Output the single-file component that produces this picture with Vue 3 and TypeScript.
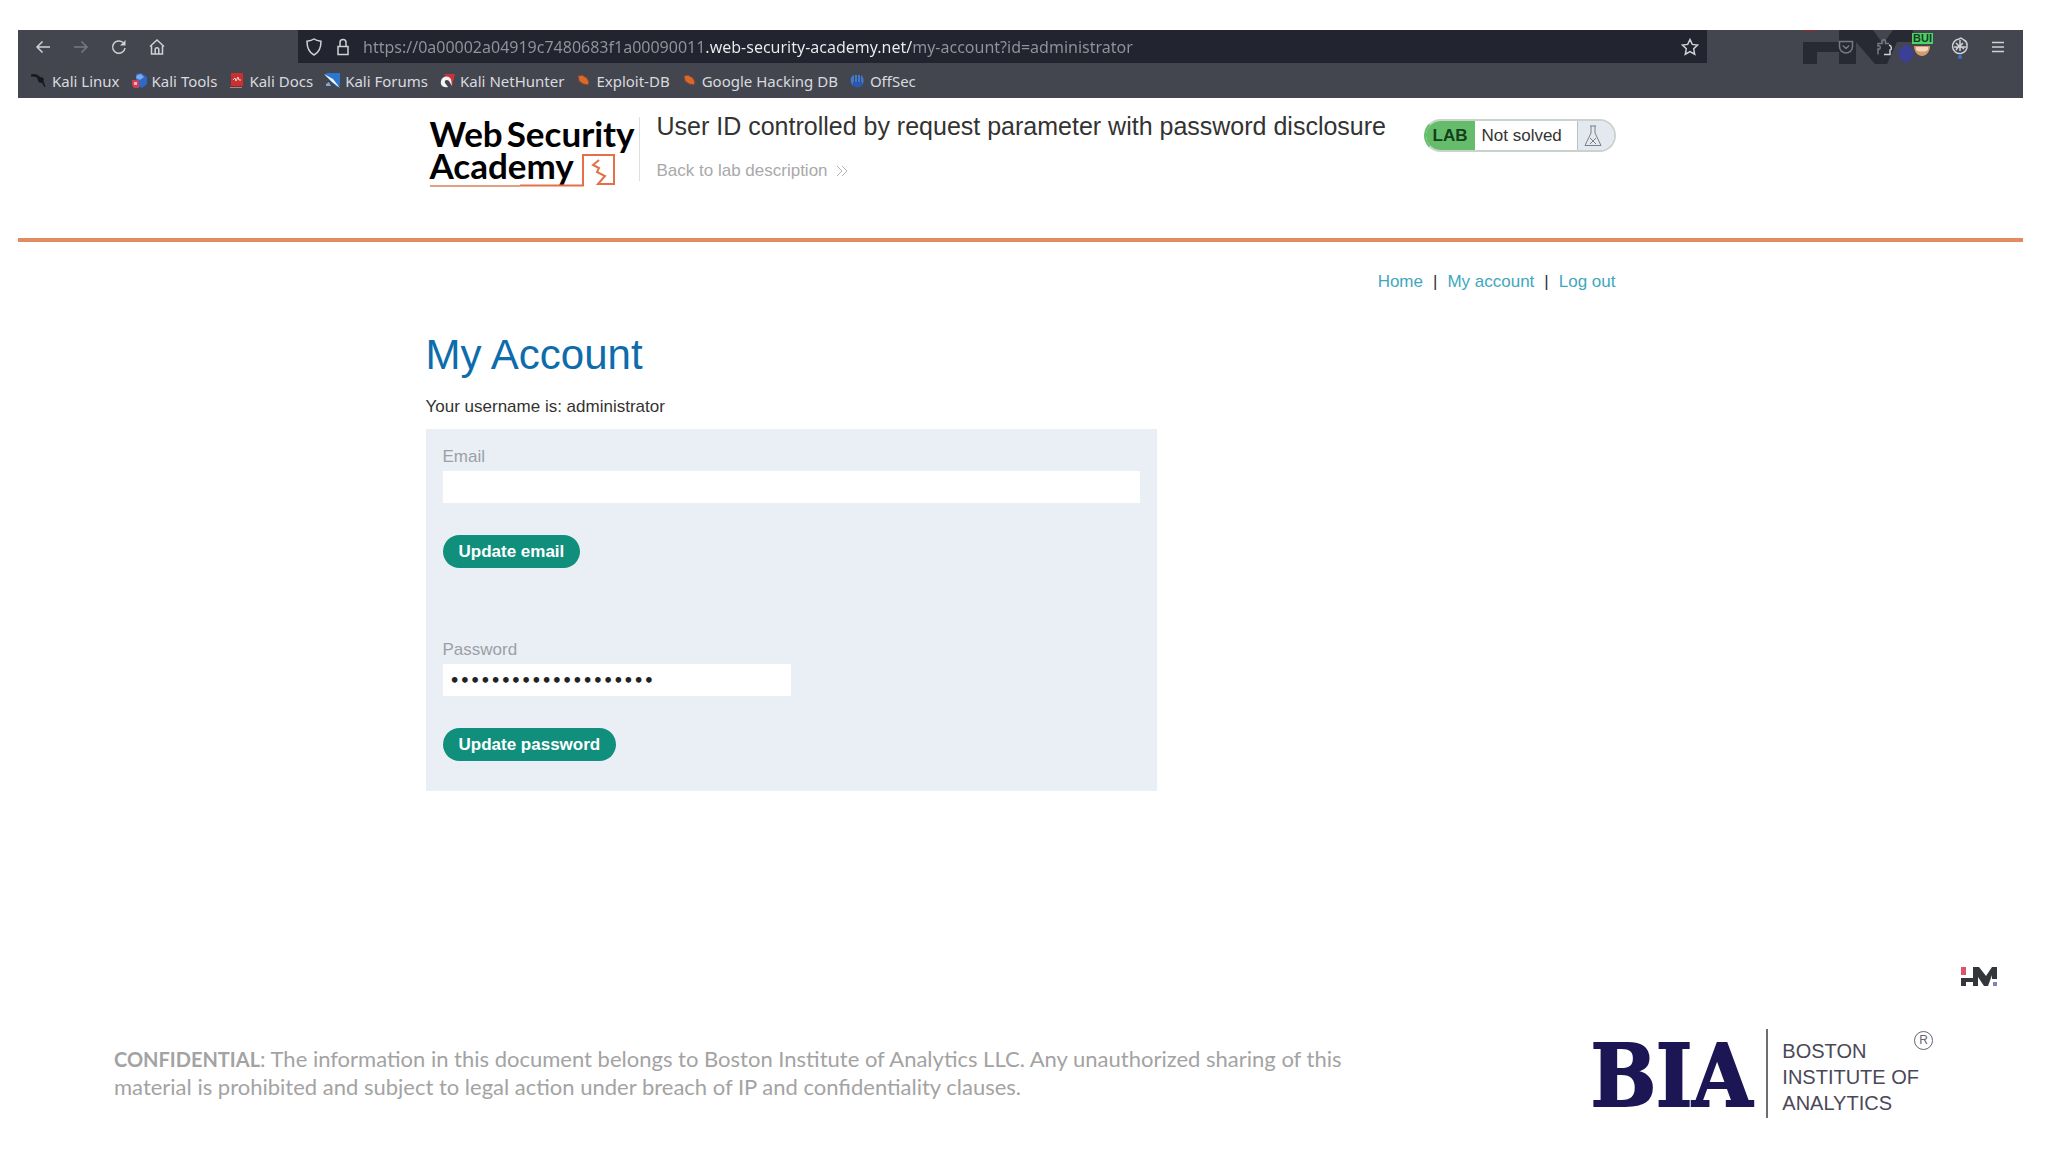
<script setup lang="ts">
import { ref } from 'vue'

interface Bookmark {
  label: string
  icon: string
}

const bookmarks: Bookmark[] = [
  { label: 'Kali Linux', icon: 'linux' },
  { label: 'Kali Tools', icon: 'tools' },
  { label: 'Kali Docs', icon: 'docs' },
  { label: 'Kali Forums', icon: 'forums' },
  { label: 'Kali NetHunter', icon: 'nethunter' },
  { label: 'Exploit-DB', icon: 'exploit' },
  { label: 'Google Hacking DB', icon: 'exploit' },
  { label: 'OffSec', icon: 'offsec' },
]

const address = ref('https://0a00002a04919c7480683f1a00090011.web-security-academy.net/my-account?id=administrator')
const email = ref('')
const password = ref('abcdefghijklmnopqrst')
</script>

<template>
  <div class="slide">
    <section class="browser">
      <div class="chrome">
        <div class="toolbar">
          <nav class="nav-buttons" aria-label="Browser navigation">
            <button type="button" class="tool" aria-label="Back">
              <svg width="18" height="18" viewBox="0 0 18 18"><path d="M16 9H3M8.500 3.500L3 9l5.500 5.500" /></svg>
            </button>
            <button type="button" class="tool dim" aria-label="Forward">
              <svg width="18" height="18" viewBox="0 0 18 18"><path d="M2 9h13M9.500 3.500L15 9l-5.500 5.500" /></svg>
            </button>
            <button type="button" class="tool" aria-label="Reload">
              <svg width="18" height="18" viewBox="0 0 18 18"><path d="M15 10a6.200 6.200 0 1 1-2-5.500" /><path d="M15.500 2v5.500H10z" class="fill" /></svg>
            </button>
            <button type="button" class="tool" aria-label="Home">
              <svg width="18" height="18" viewBox="0 0 18 18"><path d="M2 8.500L9 2l7 6.500M3.500 8v8h11V8M7.200 16v-4.500a1.800 1.800 0 0 1 3.600 0V16" /></svg>
            </button>
          </nav>
          <div class="address">
            <svg width="18" height="20" viewBox="0 0 18 20"><path d="M9 2c2 1.500 4.500 2 7 2.200C16 10 15 15 9 18 3 15 2 10 2 4.200 4.500 4 7 3.500 9 2z" /></svg>
            <svg width="16" height="20" viewBox="0 0 16 20"><path d="M3 9.500h10v8H3zM5 9.500V5.500a3 3 0 0 1 6 0v4" /></svg>
            <input v-model="address" type="text" aria-label="Address" spellcheck="false" />
            <button type="button" class="tool" aria-label="Bookmark this page">
              <svg width="18" height="18" viewBox="0 0 18 18"><path d="M9 1.500l2.300 4.900 5.200.7-3.800 3.700 1 5.400L9 13.600l-4.700 2.600 1-5.400L1.500 7.100l5.200-.7z" /></svg>
            </button>
          </div>
          <div class="extensions">
            <svg class="watermark" width="116" height="36" viewBox="0 0 116 36" aria-hidden="true">
              <path d="M0 0h14v1.500H0z" fill="#7d2f3a" />
              <path d="M0 12h36V0h34l10 14L90 0h20v12H94L84 34H72L53 12v22H36V22H14v12H0z" fill="#272a33" />
              <path d="M103 14l8 7-2 8-6 4-6-4-2-8z" fill="#3b3f96" />
            </svg>
            <button type="button" class="tool dim" aria-label="Save to Pocket">
              <svg width="18" height="18" viewBox="0 0 18 18"><path d="M2.500 3.500h13v5a6.500 6.500 0 0 1-13 0zM5.800 7.500L9 10.500l3.200-3" /></svg>
            </button>
            <button type="button" class="tool dim" aria-label="Extensions">
              <svg width="18" height="18" viewBox="0 0 18 18"><path d="M3 16.500V11c3 1 3-4 0-3V5.500h4c-1.500-5 5-5 3.500 0H14" /><path d="M14 7c3 1 3 5 1 5v4.500H9" class="bright" /></svg>
            </button>
            <button type="button" class="tool proxy" aria-label="Proxy profile">
              <svg width="20" height="22" viewBox="0 0 20 22"><path d="M2 10h16c0 6-4 10-8 10s-8-4-8-10z" fill="#d79a70" stroke="none" /><path d="M4 11h12v3c-3 2-9 2-12 0z" fill="#f0d8ba" stroke="none" /></svg>
              <span class="badge">BUI</span>
            </button>
            <button type="button" class="tool" aria-label="Cookie manager">
              <svg width="20" height="24" viewBox="0 0 20 24"><path d="M9 4A7.300 7.300 0 1 0 17 10c0-3-1-4-3-5l-3-2z" /><path d="M6 8l3 3-3 4M13 8l-3 3 4 3M4 12h12M10 5v11" /><circle cx="10" cy="22" r="2" fill="#3b6fd0" stroke="none" /></svg>
            </button>
            <button type="button" class="tool" aria-label="Menu">
              <svg width="18" height="18" viewBox="0 0 18 18"><path d="M3 4.500h12M3 9h12M3 13.500h12" /></svg>
            </button>
          </div>
        </div>
        <nav class="bookmarks" aria-label="Bookmarks">
          <a v-for="b in bookmarks" :key="b.label" href="#">
            <svg width="17" height="17" viewBox="0 0 17 17" aria-hidden="true">
              <path v-if="b.icon === 'linux'" d="M0 3c4-1 8 0 9 3 3-1 4 1 3 3l2 6-3-5c-3 1-4-1-4-4C5 4 3 4 0 4z" fill="#17181d" stroke="#17181d" />
              <g v-else-if="b.icon === 'tools'">
                <path d="M5 2l5-1 6 4v7l-5 4-6-3z" fill="#2e68c8" />
                <path d="M6 3l4-1 3 3-4 3-4-2z" fill="#7aaae8" />
                <path d="M1 8h7v8H3l-2-3z" fill="#d23d50" />
                <path d="M3 10h3v3H3z" fill="#eab3c0" />
              </g>
              <g v-else-if="b.icon === 'docs'">
                <path d="M3 1h12v13H3z" fill="#c9302f" />
                <path d="M2 15h12v1H2z" fill="#e17069" />
                <path d="M5 8l2-2 1 3 2-4 1 3h2" fill="none" stroke="#f6d3cf" />
              </g>
              <g v-else-if="b.icon === 'forums'">
                <path d="M3 1h13v12l-3 2L1 3z" fill="#2b76cf" />
                <path d="M0 2l9 5 7 9-8-6z" fill="#f1f5fb" />
                <path d="M2 12l3-2 2 4H2z" fill="#7ea8dc" />
              </g>
              <g v-else-if="b.icon === 'nethunter'">
                <path d="M5 2h11l-3 12-2-5z" fill="#c9343a" />
                <path d="M13 14L10 9C8 7 5 8 6 11l3 4C4 16 1 13 2 9c1-5 7-6 10-2z" fill="#f6f3f4" />
              </g>
              <path v-else-if="b.icon === 'exploit'" d="M3 4l4-1 5 3 2 4-1 3-5-1-4-3z" fill="#d9682c" stroke="#7c4630" />
              <g v-else>
                <path d="M2 6c1-2 2-3 3-3v11c-2-1-4-4-3-8zM6 3h2v8H6zM9 3h2v8H9zM12 3c3 2 4 8 0 11z" fill="#3d7ad4" />
                <path d="M4 10h9v4c-3 2-6 2-9 0z" fill="#2a56b4" />
              </g>
            </svg>
            <span>{{ b.label }}</span>
          </a>
        </nav>
      </div>

      <header class="lab-header">
        <div class="container lab-row">
          <div class="academy">
            <div class="academy-line"><span>Web</span><span>Security</span></div>
            <div class="academy-line"><span>Academy</span></div>
            <svg class="academy-mark" width="190" height="38" viewBox="0 0 190 38" aria-hidden="true">
              <path d="M0 34h90" stroke="#e3a184" stroke-width="2" />
              <path d="M90 33.500h63V3h31v29h-16l7-8-8-4 2-4-6-3 6-5" stroke="#e4704a" stroke-width="2" />
            </svg>
          </div>
          <div class="lab-title">
            <h2>User ID controlled by request parameter with password disclosure</h2>
            <a href="#">Back to lab description
              <svg width="13" height="12" viewBox="0 0 13 12" aria-hidden="true"><path d="M1 1l5 5-5 5M6 1l5 5-5 5" /></svg>
            </a>
          </div>
          <div class="status">
            <strong>LAB</strong>
            <span class="state">Not solved</span>
            <span class="flask">
              <svg width="18" height="22" viewBox="0 0 18 22" aria-hidden="true"><path d="M6 1h6M7 1v7L1 20.500h16L11 8V1M6 13l6 6M12 13l-6 6" /></svg>
            </span>
          </div>
        </div>
      </header>

      <main class="container">
        <nav class="account-nav" aria-label="Account">
          <a href="#">Home</a><span>|</span><a href="#">My account</a><span>|</span><a href="#">Log out</a>
        </nav>
        <h1>My Account</h1>
        <p class="username">Your username is: administrator</p>
        <div class="panel">
          <form @submit.prevent>
            <label for="email">Email</label>
            <input id="email" v-model="email" type="email" class="field" />
            <button type="submit" class="action">Update email</button>
          </form>
          <form @submit.prevent>
            <label for="password">Password</label>
            <input id="password" v-model="password" type="password" class="field short" />
            <button type="submit" class="action">Update password</button>
          </form>
        </div>
      </main>
    </section>

    <svg class="hm" width="36" height="20" viewBox="0 0 36 20" aria-hidden="true">
      <path d="M0 0h5v8H0z" fill="#dd5468" />
      <path d="M0 11h12V0h6l7 9 6-9h5v12h-5V8l-4 11h-4l-6-9v9h-5v-4H5v4H0z" fill="#33363b" />
      <path d="M32 15h4v4h-4z" fill="#7f83b5" />
    </svg>

    <footer class="footer">
      <p><strong>CONFIDENTIAL</strong>: The information in this document belongs to Boston Institute of Analytics LLC. Any unauthorized sharing of this<br>material is prohibited and subject to legal action under breach of IP and confidentiality clauses.</p>
      <div class="brand">
        <span class="bia">BIA</span>
        <span class="brand-name">BOSTON<br>INSTITUTE OF<br>ANALYTICS</span>
        <span class="registered">R</span>
      </div>
    </footer>
  </div>
</template>

<style>
body {
  background: #fff;
}
</style>

<style scoped>
* {
  box-sizing: border-box;
}

.slide {
  display: flex;
  flex-direction: column;
  min-height: 100vh;
  padding: 30px 25px 34px 18px;
  font-family: "Liberation Sans", Arial, sans-serif;
  font-size: 17px;
  line-height: 20px;
  color: #333332;
}

a {
  text-decoration: none;
}

.browser {
  flex: 1;
}

.chrome {
  background: #44464f;
  font-family: "Noto Sans", sans-serif;
}

.toolbar {
  display: flex;
  height: 33px;
}

.tool {
  display: flex;
  flex: none;
  align-items: center;
  justify-content: center;
  width: 38px;
  height: 33px;
  padding: 0;
  border: 0;
  background: none;
}

.tool svg,
.address > svg {
  flex: none;
  fill: none;
  stroke: #d0d1d6;
  stroke-width: 1.5;
}

.tool .fill {
  fill: #d0d1d6;
  stroke: none;
}

.tool.dim svg {
  stroke: #777981;
}

.tool .bright {
  stroke: #d0d1d6;
}

.nav-buttons {
  display: flex;
  flex: 0 0 280px;
  padding-left: 6px;
}

.address {
  display: flex;
  flex: 1;
  align-items: center;
  gap: 12px;
  padding-left: 7px;
  background: #22252f;
}

.address .tool {
  width: 34px;
}

.address input {
  flex: 1;
  min-width: 0;
  height: 32px;
  padding: 0;
  border: 0;
  outline: 0;
  background: linear-gradient(to right, #92949b 342px, #eeeef2 342px, #eeeef2 549px, #92949b 549px);
  background-clip: text;
  -webkit-background-clip: text;
  color: transparent;
  font: 16px "Noto Sans", sans-serif;
}

.extensions {
  position: relative;
  display: flex;
  flex: 0 0 316px;
  justify-content: flex-end;
  padding-right: 6px;
}

.extensions .tool {
  position: relative;
}

.watermark {
  position: absolute;
  top: 0;
  right: 104px;
}

.badge {
  position: absolute;
  top: 3px;
  left: 9px;
  width: 21px;
  overflow: hidden;
  background: #4fd06a;
  color: #12401c;
  font-size: 11px;
  font-weight: 700;
  line-height: 11px;
}

.bookmarks {
  display: flex;
  align-items: center;
  gap: 11px;
  height: 35px;
  padding: 0 13px;
}

.bookmarks a {
  display: flex;
  align-items: center;
  gap: 4px;
  color: #d9dadf;
  font-size: 15px;
  white-space: nowrap;
}

.container {
  width: 100%;
  max-width: 1190px;
  margin: 0 auto;
}

.lab-header {
  height: 144px;
  border-bottom: 4px solid #e28a62;
}

.lab-row {
  display: flex;
  align-items: flex-start;
}

.academy {
  position: relative;
  flex: 0 0 214px;
  height: 64px;
  margin-top: 19px;
  padding-left: 4px;
  border-right: 1px solid #dedede;
  color: #000;
  font: 700 35px/32px Lato, sans-serif;
}

.academy-line {
  display: flex;
  gap: 4px;
}

.academy-mark {
  position: absolute;
  top: 35px;
  left: 4px;
  fill: none;
}

.lab-title {
  flex: 1;
  padding: 12px 0 0 17px;
}

.lab-title h2 {
  margin: 0 0 19px;
  font-size: 25px;
  font-weight: 400;
  line-height: 32px;
}

.lab-title a {
  display: flex;
  align-items: center;
  gap: 8px;
  color: #a9a9a9;
}

.lab-title svg {
  fill: none;
  stroke: #b4b4b4;
}

.status {
  display: flex;
  height: 33px;
  margin-top: 21px;
  overflow: hidden;
  border: 2px solid #c9d2cb;
  border-left-color: #65bd6c;
  border-radius: 17px;
  line-height: 29px;
}

.status strong {
  width: 49px;
  padding-left: 7px;
  background: #65bd6c;
  color: #133f1b;
}

.state {
  width: 102px;
  padding-left: 7px;
}

.flask {
  display: flex;
  align-items: center;
  width: 37px;
  padding-left: 6px;
  border-left: 1px solid #b9c2cb;
  background: #e4e9ef;
}

.flask svg {
  fill: none;
  stroke: #75808c;
}

.account-nav {
  display: flex;
  justify-content: flex-end;
  gap: 10px;
  padding-top: 30px;
}

.account-nav a {
  color: #3fa7bd;
}

h1 {
  margin: 39px 0 18px;
  color: #0d6cab;
  font-size: 42px;
  font-weight: 400;
  line-height: 48px;
}

.username {
  margin: 0 0 12px;
}

.panel {
  display: flex;
  flex-direction: column;
  gap: 72px;
  width: 731px;
  max-width: 100%;
  padding: 18px 17px 30px;
  background: #e9eff5;
}

form {
  display: flex;
  flex-direction: column;
  align-items: flex-start;
}

label {
  color: #9b9fa6;
}

.field {
  width: 100%;
  height: 32px;
  margin: 4px 0 32px;
  padding: 0 7px;
  border: 0;
  background: #fff;
  color: #222;
  font: 700 16px "DejaVu Sans", sans-serif;
}

.field.short {
  width: 50%;
}

.action {
  height: 33px;
  padding: 0 16px;
  border: 0;
  border-radius: 17px;
  background: #0f8f7c;
  color: #fff;
  font: 700 17px/33px "Liberation Sans", Arial, sans-serif;
}

.hm {
  align-self: flex-end;
  margin: 0 26px 42px 0;
}

.footer {
  display: flex;
  align-items: flex-start;
  justify-content: space-between;
  padding: 0 90px 0 96px;
}

.footer p {
  margin: 16px 0 0;
  color: #a3a3a3;
  font: 22px/28px Lato, sans-serif;
}

.footer strong {
  font-size: 20px;
}

.brand {
  position: relative;
  display: flex;
  height: 89px;
  padding-right: 14px;
}

.bia {
  padding-right: 14px;
  border-right: 2px solid #6d6d72;
  color: #1c1654;
  font: 700 86px/94px "DejaVu Serif Condensed", "DejaVu Serif", serif;
  -webkit-text-stroke: 2px #1c1654;
}

.brand-name {
  padding: 9px 0 0 14px;
  color: #4a4858;
  font-size: 20px;
  line-height: 26px;
}

.registered {
  position: absolute;
  top: 2px;
  right: 0;
  width: 19px;
  height: 19px;
  border: 1px solid #66646c;
  border-radius: 50%;
  color: #66646c;
  font-size: 12px;
  line-height: 17px;
  text-align: center;
}
</style>
